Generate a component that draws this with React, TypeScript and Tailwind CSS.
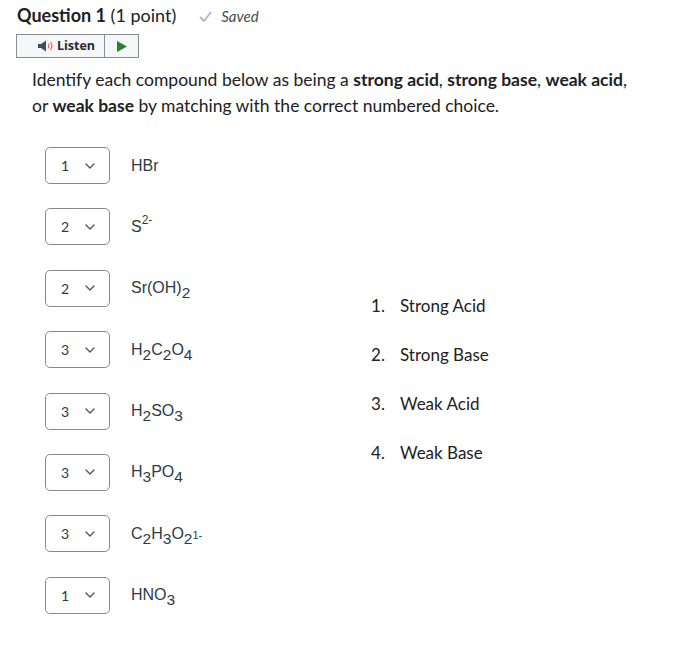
const rows: { v: string; label: React.ReactNode }[] = [
  { v: "1", label: <>HBr</> },
  { v: "2", label: <>S<Sup>2-</Sup></> },
  { v: "2", label: <>Sr(OH)<Sub>2</Sub></> },
  { v: "3", label: <>H<Sub>2</Sub>C<Sub>2</Sub>O<Sub>4</Sub></> },
  { v: "3", label: <>H<Sub>2</Sub>SO<Sub>3</Sub></> },
  { v: "3", label: <>H<Sub>3</Sub>PO<Sub>4</Sub></> },
  { v: "3", label: <>C<Sub>2</Sub>H<Sub>3</Sub>O<Sub>2</Sub><span className="text-[11px]">1-</span></> },
  { v: "1", label: <>HNO<Sub>3</Sub></> },
];

const choices = ["Strong Acid", "Strong Base", "Weak Acid", "Weak Base"];

function Sub({ children }: { children: React.ReactNode }) {
  return <sub className="text-[15.5px] relative top-[5px] align-baseline">{children}</sub>;
}

function Sup({ children }: { children: React.ReactNode }) {
  return <sup className="text-[12px] relative -top-[8px] align-baseline">{children}</sup>;
}

function Select({ v }: { v: string }) {
  return (
    <div className="w-[65px] h-[37px] border border-[#8a8a8a] rounded-[5px] flex items-center pl-[15px] pr-[10px] text-[14px] text-[#2d3b45] bg-white">
      <span className="flex-1">{v}</span>
      <svg width="10" height="6" viewBox="0 0 10 6" className="mr-[4px]">
        <path d="M1 1l4 4 4-4" fill="none" stroke="#555" strokeWidth="1.4" strokeLinecap="round" strokeLinejoin="round" />
      </svg>
    </div>
  );
}

export default function App() {
  return (
    <div className="w-[694px] h-[649px] bg-white text-[#2d3b45]" style={{ fontFamily: "Lato, sans-serif" }}>
      <div className="pl-[17px] pt-[2px] flex items-baseline gap-[23px]">
        <h2 className="text-[18px] leading-[27px] text-[#202122]">
          <span className="font-bold">Question 1</span> <span>(1 point)</span>
        </h2>
        <span className="flex items-center gap-[9px] text-[15px] italic text-[#494c4e]">
          <svg width="13" height="11" viewBox="0 0 13 11">
            <path d="M1 6l4 4 7-9" fill="none" stroke="#b5b5b5" strokeWidth="1.8" />
          </svg>
          Saved
        </span>
      </div>

      <div className="ml-[16px] mt-[5px] w-[123px] h-[24px] border border-[#8b8b8b] bg-[#f4f6f9] flex">
        <div className="w-[88px] border-r border-[#8b8b8b] flex items-center justify-end pr-[9px] gap-[3px]">
          <svg width="16" height="12" viewBox="0 0 16 12">
            <path d="M0 4h3l5-3.5v11L3 8H0z" fill="#3d4d66" />
            <path d="M10 3.5c1 1.5 1 3.5 0 5M12.5 2c1.8 2.5 1.8 5.5 0 8" fill="none" stroke="#e8695f" strokeWidth="1.2" />
          </svg>
          <span className="text-[12.5px] font-bold text-[#2a2a2a]" style={{ fontFamily: "'Open Sans', sans-serif" }}>Listen</span>
        </div>
        <div className="flex-1 flex items-center justify-center">
          <svg width="10" height="11" viewBox="0 0 10 11">
            <path d="M0 0l10 5.5L0 11z" fill="#2e7d32" />
          </svg>
        </div>
      </div>

      <p className="ml-[32px] mt-[9px] text-[17.5px] leading-[26px] text-[#202122] w-[640px]">
        Identify each compound below as being a <b>strong acid</b>, <b>strong base</b>, <b>weak acid</b>,
        <br />
        or <b>weak base</b> by matching with the correct numbered choice.
      </p>

      <div className="flex mt-[28px] ml-[45px]">
        <div className="flex flex-col gap-[24.4px] w-[326px]">
          {rows.map((r, i) => (
            <div key={i} className="flex items-center h-[37px]">
              <Select v={r.v} />
              <span className="ml-[21px] text-[16px] text-[#2d3b45]" style={{ fontFamily: "'Liberation Sans', Arial, sans-serif" }}>
                {r.label}
              </span>
            </div>
          ))}
        </div>
        <div className="flex flex-col justify-center gap-[26px] pb-[2px]">
          {choices.map((c, i) => (
            <div key={i} className="flex text-[17px] leading-[23px] text-[#202122]">
              <span className="w-[29px]">{i + 1}.</span>
              <span>{c}</span>
            </div>
          ))}
        </div>
      </div>
    </div>
  );
}
